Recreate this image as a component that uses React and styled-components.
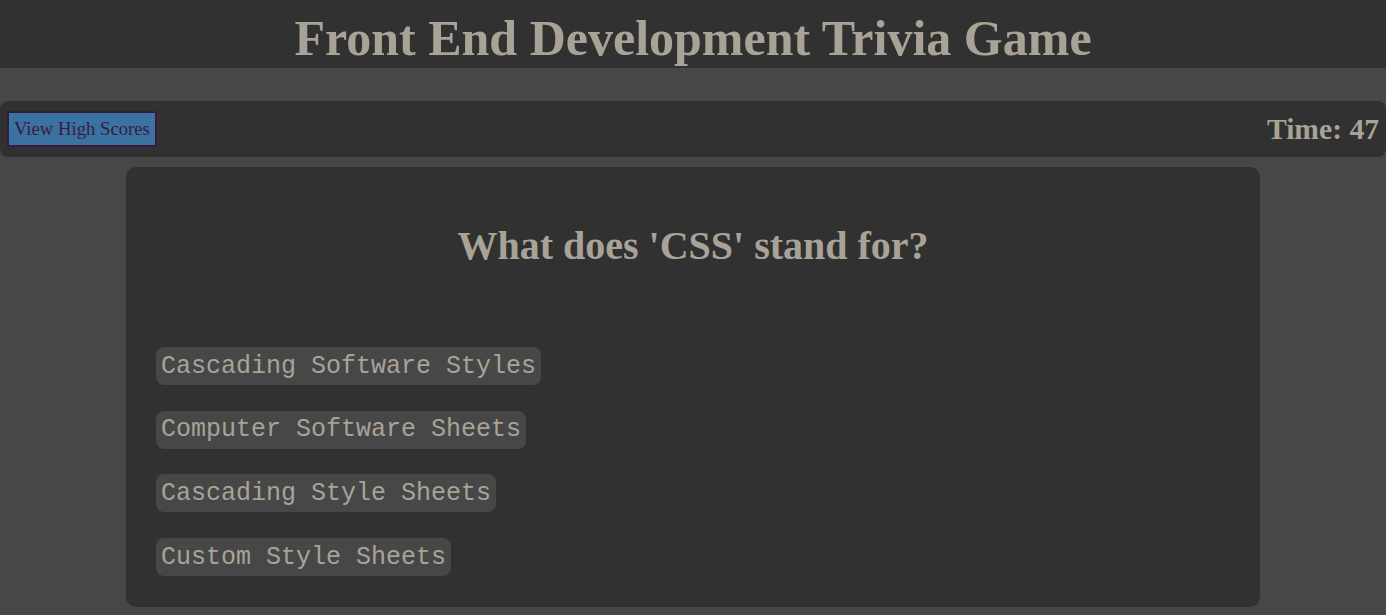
import React from 'react';
import styled, { createGlobalStyle } from 'styled-components';

const GlobalStyle = createGlobalStyle`
    body {
        margin: 0;
        background: #474747;
        font-family: "Liberation Serif", "Times New Roman", serif;
        color: #a9a397;
    }
`;

const Header = styled.header`
    background: #313131;
    height: 68px;
    display: flex;
    align-items: center;
    justify-content: center;
`;

const Title = styled.h1`
    margin: 0;
    font-size: 50px;
    font-weight: bold;
    color: #a9a397;
    padding-top: 8px;
`;

const Main = styled.main`
    padding-top: 33px;
    display: flex;
    flex-direction: column;
    align-items: center;
    gap: 10px;
`;

const Toolbar = styled.div`
    align-self: stretch;
    height: 56px;
    background: #313131;
    border-radius: 8px;
    display: flex;
    align-items: center;
    justify-content: space-between;
    padding: 0 7px;
`;

const ScoresButton = styled.button`
    height: 36px;
    padding: 0 5px;
    background: #3a72a1;
    border: 2px solid #3a1a40;
    color: #3a1a40;
    font-family: "Liberation Serif", "Times New Roman", serif;
    font-size: 18.7px;
    cursor: pointer;
`;

const Timer = styled.div`
    font-size: 29.6px;
    font-weight: bold;
`;

const Card = styled.section`
    width: 1134px;
    box-sizing: border-box;
    background: #313131;
    border-radius: 10px;
    padding: 56px 30px 31px;
`;

const Question = styled.h2`
    margin: 0 0 78px;
    text-align: center;
    font-size: 40px;
    line-height: 46px;
    font-weight: bold;
`;

const Answers = styled.div`
    display: flex;
    flex-direction: column;
    align-items: flex-start;
    gap: 25.7px;
`;

const Answer = styled.button`
    background: #474747;
    border: none;
    border-radius: 8px;
    height: 38px;
    padding: 0 5px;
    color: #a9a397;
    font-family: "Liberation Mono", "Courier New", monospace;
    font-size: 25px;
    cursor: pointer;
`;

const answers = [
    'Cascading Software Styles',
    'Computer Software Sheets',
    'Cascading Style Sheets',
    'Custom Style Sheets'
];

export default function App() {
    return (
        <>
            <GlobalStyle />
            <Header>
                <Title>Front End Development Trivia Game</Title>
            </Header>
            <Main>
                <Toolbar>
                    <ScoresButton>View High Scores</ScoresButton>
                    <Timer>Time: 47</Timer>
                </Toolbar>
                <Card>
                    <Question>What does 'CSS' stand for?</Question>
                    <Answers>
                        {answers.map(a => <Answer key={a}>{a}</Answer>)}
                    </Answers>
                </Card>
            </Main>
        </>
    );
}
